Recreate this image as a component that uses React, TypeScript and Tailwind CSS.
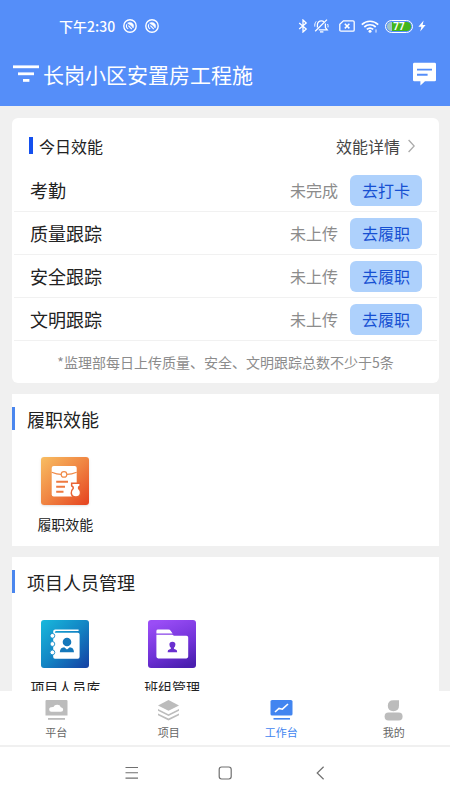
import { useState } from 'react';
import type { ReactNode } from 'react';

const tasks = [
  { name: '考勤', status: '未完成', action: '去打卡' },
  { name: '质量跟踪', status: '未上传', action: '去履职' },
  { name: '安全跟踪', status: '未上传', action: '去履职' },
  { name: '文明跟踪', status: '未上传', action: '去履职' },
];

const SwirlIcon = () => (
  <svg viewBox="0 0 14 14" className="w-3.5 h-3.5" fill="none" stroke="white">
    <circle cx="7" cy="7" r="6.2" strokeWidth="1.4" />
    <path d="M5.2 9.9A3.6 3.6 0 0 1 3.9 5.2" strokeWidth="1.1" />
    <path d="M4.6 4.2C6.4 2.8 9 3.2 10.2 5.4C10.8 6.8 10.6 8 10.1 8.9C9.2 7.2 7.4 5.8 4.6 4.2Z" fill="white" strokeWidth="0.6" />
    <path d="M5.4 6.6L8.8 10.2" strokeWidth="1.2" />
  </svg>
);

const StatusBar = () => (
  <div className="h-[52px] flex items-center justify-between pl-[59px] pr-6">
    <div className="flex items-center gap-2">
      <span className="text-sm font-medium">下午2:30</span>
      <SwirlIcon />
      <SwirlIcon />
    </div>
    <div className="flex items-center">
      {/* Bluetooth */}
      <svg viewBox="0 0 10 14" className="w-2.5 h-3.5" fill="none" stroke="white" strokeWidth="1.3">
        <path d="M1.2 4L8.2 10L5 13V1L8.2 4L1.2 10" />
      </svg>
      {/* Muted bell */}
      <svg viewBox="0 0 15 14" className="w-[15px] h-3.5 ml-1.5" fill="none" stroke="white" strokeWidth="1.3">
        <path d="M3.4 8.6V5.8C3.4 3.6 5 1.8 7.4 1.8C8.4 1.8 9.4 2.2 10 2.8" />
        <path d="M11.4 4.6V8.6L13.2 10.9H4.8" />
        <path d="M6 12.9H9.4" />
        <path d="M13 0.6L1.2 12.2" />
        <path d="M0.8 7.6C0.6 5.6 1 3.8 2.2 2.4M13.6 5C14.2 6.2 14.2 7.2 14 8.4" strokeWidth="1" />
      </svg>
      {/* SIM card missing */}
      <svg viewBox="0 0 16 12" className="w-4 h-3 ml-2.5" fill="none" stroke="white" strokeWidth="1.3">
        <path d="M4.4 0.8H14Q15.2 0.8 15.2 2V10Q15.2 11.2 14 11.2H2Q0.8 11.2 0.8 10V4.2Z" />
        <path d="M5.8 3.8L10.4 8.4M10.4 3.8L5.8 8.4" strokeWidth="1.5" />
      </svg>
      {/* Wifi */}
      <svg viewBox="0 0 18 13" className="w-[18px] h-[13px] ml-1.5" fill="none" stroke="white" strokeWidth="1.7">
        <path d="M0.8 4.6C5.5 0.1 12.5 0.1 17.2 4.6" />
        <path d="M3.3 7C6.6 4 11.4 4 14.7 7" />
        <path d="M5.8 9.4C7.7 7.8 10.3 7.8 12.2 9.4" />
        <circle cx="9" cy="11.3" r="1.5" fill="white" stroke="none" />
        <path d="M15 9.4V12.6" strokeWidth="0.9" />
      </svg>
      <div className="w-7 h-[13px] ml-1.5 rounded-full border border-white p-px">
        <div className="h-full rounded-full bg-linear-to-r from-[#9fc4c8] from-22% to-[#43b51c] to-22% flex items-center justify-center">
          <span className="pt-px font-['Roboto',sans-serif] text-[10px] leading-[10px] font-bold">77</span>
        </div>
      </div>
      {/* Charging */}
      <svg viewBox="0 0 8 12" className="w-2 h-3 ml-[5px]" fill="white">
        <path d="M5.6 0.4L0.4 6.8H3.4L2.2 11.6L7.6 5H4.6Z" />
      </svg>
    </div>
  </div>
);

const Header = () => (
  <header className="shrink-0 h-[106px] bg-[#558ef9] text-white">
    <StatusBar />
    <div className="h-[43px] flex items-center pl-[13px] pr-3.5">
      <button aria-label="切换项目">
        <svg viewBox="0 0 26 18" className="w-[26px] h-[18px]" fill="white">
          <rect x="0" y="0.4" width="26" height="2.8" />
          <rect x="5" y="7.4" width="16" height="2.8" />
          <rect x="10" y="14" width="6.4" height="2.8" />
        </svg>
      </button>
      <h1 className="flex-1 ml-1 text-[21px] leading-7 truncate">长岗小区安置房工程施</h1>
      <button aria-label="消息">
        <svg viewBox="0 0 23 24" className="w-[23px] h-6">
          <path d="M1.4 0.8H21.6Q23 0.8 23 2.2V18Q23 19.2 21.6 19.2H12L7.4 23.6V19.2H1.4Q0 19.2 0 18V2.2Q0 0.8 1.4 0.8Z" fill="white" />
          <path d="M4 7.6H19M4 12.8H14.6" stroke="#558ef9" strokeWidth="1.9" />
        </svg>
      </button>
    </div>
  </header>
);

const TodayCard = () => (
  <section className="bg-white rounded-md">
    <div className="h-[51px] pt-1 flex items-center pl-[17px] pr-6">
      <span className="w-1 h-[17px] bg-[#1450ee]" />
      <h2 className="ml-1.5 text-base text-[#222]">今日效能</h2>
      <a href="#detail" className="ml-auto flex items-center gap-2 text-base text-[#444]">
        效能详情
        <svg viewBox="0 0 7 14" className="w-[7px] h-3.5" fill="none" stroke="#aaa" strokeWidth="1.3">
          <path d="M0.6 1L6.2 7L0.6 13" />
        </svg>
      </a>
    </div>
    <ul>
      {tasks.map((task) => (
        <li key={task.name} className="h-[43px] mx-0.5 pl-4 pr-[15px] flex items-center border-b border-[#f1f1f1]">
          <span className="text-lg text-[#222]">{task.name}</span>
          <span className="ml-auto text-base text-[#8c8c8c]">{task.status}</span>
          <button className="ml-3 w-[72px] h-[31px] rounded-md bg-[#aed1fc] text-base text-[#1650d2]">
            {task.action}
          </button>
        </li>
      ))}
    </ul>
    <p className="h-[42px] flex items-center justify-center text-sm text-[#8c8c8c] whitespace-nowrap">
      *监理部每日上传质量、安全、文明跟踪总数不少于5条
    </p>
  </section>
);

const ReportIcon = () => (
  <svg viewBox="0 0 48 48" className="w-12 h-12 rounded-[3px] shadow-sm">
    <defs>
      <linearGradient id="reportBg" x1="0" y1="0" x2="1" y2="1">
        <stop offset="0" stopColor="#f8be62" />
        <stop offset="0.5" stopColor="#f08542" />
        <stop offset="1" stopColor="#e5421f" />
      </linearGradient>
    </defs>
    <rect width="48" height="48" fill="url(#reportBg)" />
    <rect x="10.7" y="9" width="25" height="30.4" rx="2" fill="white" />
    <path d="M10.7 15.2Q16 17.4 20 17.4M26 17.4Q30.4 17.4 35.7 15.2" fill="none" stroke="#f08a48" strokeWidth="1.2" />
    <circle cx="23" cy="17.4" r="2.8" fill="white" stroke="#f08a48" strokeWidth="1.2" />
    <path d="M15.2 24.8H27M15.2 29.8H24M15.2 34.8H22.5" stroke="#ee7a40" strokeWidth="1.9" />
    <path
      d="M31.4 27H38.4V28.6L36.9 29.8V31.8Q39 33.8 38.8 36Q38.4 39.2 34.9 39.2Q31.4 39.2 31 36Q30.8 33.8 32.9 31.8V29.8L31.4 28.6Z"
      fill="white"
      stroke="#ea6435"
      strokeWidth="3"
      paintOrder="stroke"
    />
  </svg>
);

const ContactsIcon = () => (
  <svg viewBox="0 0 48 48" className="w-12 h-12 rounded-[3px]">
    <defs>
      <linearGradient id="contactsBg" x1="0" y1="0" x2="1" y2="1">
        <stop offset="0" stopColor="#18b9dc" />
        <stop offset="0.5" stopColor="#1385c4" />
        <stop offset="1" stopColor="#153fa3" />
      </linearGradient>
    </defs>
    <rect width="48" height="48" fill="url(#contactsBg)" />
    <path d="M12.2 38V11.2Q12.2 9.4 14.2 9.4H37.6V11H15.2Q13.8 11 13.8 12.8H36.8Q38.6 12.8 38.6 14.4V36.8Q38.6 38.8 36.8 38.8H14Q12.2 38.8 12.2 37Z" fill="white" />
    {[15.8, 24, 32.4].map((y) => (
      <circle key={y} cx="11.4" cy={y} r="2.4" fill="white" stroke="#148cc8" strokeWidth="0.9" />
    ))}
    <circle cx="26" cy="22" r="4.3" fill="#1478bb" />
    <path d="M18.8 32.2Q19 27.4 23.2 27.2L26 29.6L28.8 27.2Q32.8 27.4 33 32.2Z" fill="#1478bb" />
  </svg>
);

const FolderIcon = () => (
  <svg viewBox="0 0 48 48" className="w-12 h-12 rounded-[3px]">
    <defs>
      <linearGradient id="folderBg" x1="0.3" y1="0" x2="0.7" y2="1">
        <stop offset="0" stopColor="#9a4df6" />
        <stop offset="0.6" stopColor="#6f31d6" />
        <stop offset="1" stopColor="#4a1fb0" />
      </linearGradient>
    </defs>
    <rect width="48" height="48" fill="url(#folderBg)" />
    <path d="M8.4 13.4V11Q8.4 9.6 10 9.6H20.4Q22 9.6 22.8 11L24.6 13.4Z" fill="white" />
    <path d="M8.4 14.8H24.4L26 15.8H38.4Q40.2 15.8 40.2 17.4V36.6Q40.2 38.4 38.4 38.4H10.2Q8.4 38.4 8.4 36.6Z" fill="white" />
    <path d="M24.4 21.8Q27.4 21.8 27.4 24.6Q27.4 26.8 25.8 28Q25.8 29.2 27.6 29.6Q29.2 30 29.2 32.2H19.6Q19.6 30 21.2 29.6Q23 29.2 23 28Q21.4 26.8 21.4 24.6Q21.4 21.8 24.4 21.8Z" fill="#6a30d0" />
  </svg>
);

const Section = ({ title, items }: { title: string; items: { label: string; icon: ReactNode }[] }) => (
  <section className="bg-white pt-[13px] pb-3">
    <div className="h-[23px] flex items-center">
      <span className="w-[3px] h-full bg-[#4a86ee]" />
      <h2 className="ml-3 text-lg leading-[22px] text-[#222]">{title}</h2>
    </div>
    <div className="mt-[27px] grid grid-cols-4">
      {items.map((item) => (
        <a key={item.label} href="#app" className="flex flex-col items-center">
          {item.icon}
          <span className="mt-[9px] text-sm text-[#222]">{item.label}</span>
        </a>
      ))}
    </div>
  </section>
);

const tabs = [
  {
    label: '平台',
    icon: (
      <>
        <path d="M1.5 0H21.5Q22.5 0 22.5 1V15.6H0.5V1Q0.5 0 1.5 0ZM6.4 11.8H15.8Q18.2 11.6 18.2 9.4Q18.2 7.4 15.8 7.2Q15 4.6 12 4.8Q9.4 4.8 8.4 7Q4.2 6.8 4.2 9.4Q4.2 11.6 6.4 11.8Z" fillRule="evenodd" />
        <rect x="3" y="18" width="17" height="1.8" />
      </>
    ),
  },
  {
    label: '项目',
    icon: (
      <>
        <path d="M11.5 0L22 5.4L11.5 10.8L1 5.4Z" />
        <path d="M1 9L11.5 14.2L22 9V10.8L11.5 16L1 10.8Z" />
        <path d="M1 13.4L11.5 18.6L22 13.4V15.2L11.5 20.4L1 15.2Z" />
      </>
    ),
  },
  {
    label: '工作台',
    icon: (
      <>
        <rect x="0.5" y="0" width="22" height="15.6" rx="1.6" />
        <path d="M5 12L9 8.4L12.4 9.2L18 4" fill="none" stroke="white" strokeWidth="1.6" />
        <rect x="3.5" y="18" width="16.5" height="1.6" />
      </>
    ),
  },
  {
    label: '我的',
    icon: (
      <>
        <path d="M11.4 0.2H17V5.8Q17 11.2 11.4 11.2Q5.8 11.2 5.8 5.8Q5.8 0.2 11.4 0.2Z" />
        <rect x="2.6" y="12.6" width="18" height="7.8" rx="3.9" />
      </>
    ),
  },
];

const TabBar = () => {
  const [active, setActive] = useState('工作台');

  return (
    <nav className="shrink-0 h-14 bg-white border-b-2 border-[#f0f0f0] grid grid-cols-4">
      {tabs.map((tab) => (
        <button
          key={tab.label}
          onClick={() => setActive(tab.label)}
          className="flex flex-col items-center pt-[9px]"
        >
          <svg
            viewBox="0 0 23 21"
            className={`w-[23px] h-[21px] ${active === tab.label ? 'text-[#4285f0]' : 'text-[#bcbcbc]'}`}
            fill="currentColor"
          >
            {tab.icon}
          </svg>
          <span className={`mt-[3px] text-[11px] leading-4 ${active === tab.label ? 'text-[#4285f0]' : 'text-[#666]'}`}>
            {tab.label}
          </span>
        </button>
      ))}
    </nav>
  );
};

const SystemNav = () => (
  <div className="shrink-0 h-[53px] bg-white flex items-center justify-center gap-20 pb-0.5">
    <button aria-label="最近任务">
      <svg viewBox="0 0 14 14" className="w-3.5 h-3.5" fill="none" stroke="#707070" strokeWidth="1.1">
        <path d="M1.5 1.5H14M1.5 6.8H14M1.5 12.1H14" />
      </svg>
    </button>
    <button aria-label="主屏幕">
      <svg viewBox="0 0 14 14" className="w-3.5 h-3.5" fill="none" stroke="#707070" strokeWidth="1.2">
        <rect x="1.2" y="1" width="12" height="12" rx="2.4" />
      </svg>
    </button>
    <button aria-label="返回">
      <svg viewBox="0 0 14 14" className="w-3.5 h-3.5" fill="none" stroke="#707070" strokeWidth="1.2">
        <path d="M11.6 0.8L5.2 7L11.6 13.2" />
      </svg>
    </button>
  </div>
);

export default function App() {
  return (
    <div className="h-screen flex flex-col bg-[#f0f0f0] font-['Noto_Sans_CJK_SC',sans-serif]">
      <Header />
      <main className="flex-1 min-h-0 overflow-hidden flex flex-col gap-[11px] pt-3 pl-3 pr-[11px]">
        <TodayCard />
        <Section title="履职效能" items={[{ label: '履职效能', icon: <ReportIcon /> }]} />
        <Section
          title="项目人员管理"
          items={[
            { label: '项目人员库', icon: <ContactsIcon /> },
            { label: '班组管理', icon: <FolderIcon /> },
          ]}
        />
      </main>
      <TabBar />
      <SystemNav />
    </div>
  );
}
